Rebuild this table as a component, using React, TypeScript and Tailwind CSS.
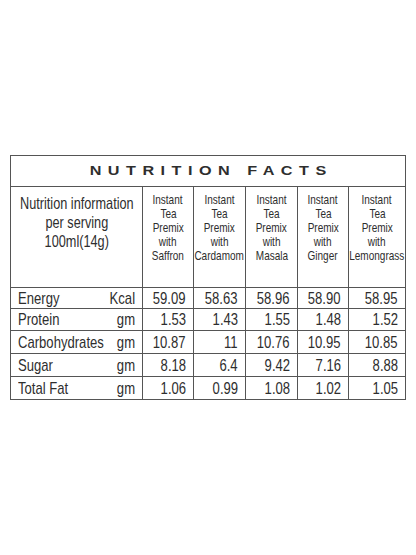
import type { ReactNode } from "react";

const products = ["Saffron", "Cardamom", "Masala", "Ginger", "Lemongrass"];

const rows = [
  { name: "Energy", unit: "Kcal", values: ["59.09", "58.63", "58.96", "58.90", "58.95"], h: "h-[21px]" },
  { name: "Protein", unit: "gm", values: ["1.53", "1.43", "1.55", "1.48", "1.52"], h: "h-[22px]" },
  { name: "Carbohydrates", unit: "gm", values: ["10.87", "11", "10.76", "10.95", "10.85"], h: "h-[23px]" },
  { name: "Sugar", unit: "gm", values: ["8.18", "6.4", "9.42", "7.16", "8.88"], h: "h-[23px]" },
  { name: "Total Fat", unit: "gm", values: ["1.06", "0.99", "1.08", "1.02", "1.05"], h: "h-[23px]" },
];

const colWidths = ["w-[51px]", "w-[52px]", "w-[52px]", "w-[51px]", "w-[57px]"];

// condensed look: no narrow face is installed, so squeeze Liberation Sans
function Narrow({ children, origin }: { children: ReactNode; origin: string }) {
  return <span className={`inline-block whitespace-nowrap scale-x-[0.77] ${origin}`}>{children}</span>;
}

export default function App() {
  return (
    <div
      className="w-[416px] h-[555px] bg-white pt-[155px] pl-[10px] text-[#2e2e2e]"
      style={{ fontFamily: '"Liberation Sans", Arial, sans-serif' }}
    >
      <table className="border-collapse table-fixed w-[395px] border-[1.5px] border-[#555]">
        <colgroup>
          <col className="w-[132px]" />
          {colWidths.map((w, i) => (
            <col key={i} className={w} />
          ))}
        </colgroup>
        <tbody>
          <tr className="h-[31px]">
            <td colSpan={6} className="border border-[#555]">
              <div className="flex justify-center">
                <span className="inline-block whitespace-nowrap text-[13.5px] font-bold tracking-[5.4px] pl-[5.4px] scale-x-[1.2] origin-center">
                  NUTRITION FACTS
                </span>
              </div>
            </td>
          </tr>
          <tr className="h-[101px]">
            <td className="border border-[#555] align-top pt-[7px]">
              <div className="flex flex-col items-center text-[16.5px] leading-[19px]">
                <Narrow origin="origin-center">Nutrition information</Narrow>
                <Narrow origin="origin-center">per serving</Narrow>
                <Narrow origin="origin-center">100ml(14g)</Narrow>
              </div>
            </td>
            {products.map((p) => (
              <td key={p} className="border border-[#555] align-top pt-[6px]">
                <div className="flex flex-col items-center text-[13px] leading-[14px]">
                  {["Instant", "Tea", "Premix", "with", p].map((t, i) => (
                    <Narrow key={i} origin="origin-center">
                      {t}
                    </Narrow>
                  ))}
                </div>
              </td>
            ))}
          </tr>
          {rows.map((r) => (
            <tr key={r.name} className={r.h}>
              <td className="border border-[#555] pl-[7px] text-[17px] leading-none overflow-hidden">
                {/* 117px of room, laid out at 117/0.77 then squeezed back */}
                <div className="flex justify-between w-[152px] scale-x-[0.77] origin-left whitespace-nowrap">
                  <span>{r.name}</span>
                  <span>{r.unit}</span>
                </div>
              </td>
              {r.values.map((v, i) => (
                <td key={i} className="border border-[#555] pr-[7px] text-[17px] leading-none">
                  <div className="flex justify-end">
                    <Narrow origin="origin-right">{v}</Narrow>
                  </div>
                </td>
              ))}
            </tr>
          ))}
        </tbody>
      </table>
    </div>
  );
}
